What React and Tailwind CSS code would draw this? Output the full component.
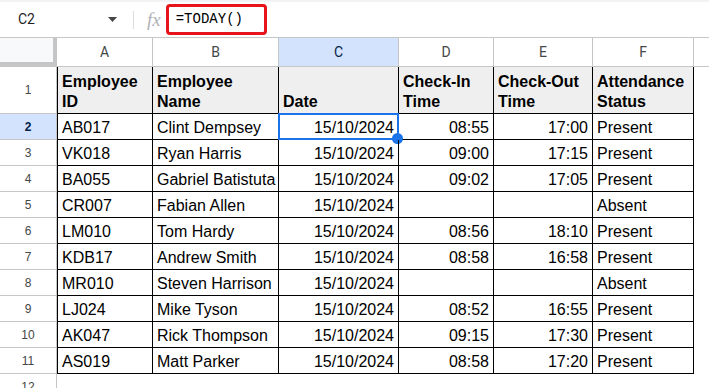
import React from "react";

// column widths: row header, A..F, rest
const COLS = "grid-cols-[57px_96px_126px_120px_95px_99px_101px_1fr]";

const rows = [
  ["AB017", "Clint Dempsey", "08:55", "17:00", "Present"],
  ["VK018", "Ryan Harris", "09:00", "17:15", "Present"],
  ["BA055", "Gabriel Batistuta", "09:02", "17:05", "Present"],
  ["CR007", "Fabian Allen", "", "", "Absent"],
  ["LM010", "Tom Hardy", "08:56", "18:10", "Present"],
  ["KDB17", "Andrew Smith", "08:58", "16:58", "Present"],
  ["MR010", "Steven Harrison", "", "", "Absent"],
  ["LJ024", "Mike Tyson", "08:52", "16:55", "Present"],
  ["AK047", "Rick Thompson", "09:15", "17:30", "Present"],
  ["AS019", "Matt Parker", "08:58", "17:20", "Present"],
];

const letters = ["A", "B", "C", "D", "E", "F", ""];

const Cell = ({ children, right, className = "" }) => (
  <div
    className={`flex items-end overflow-hidden whitespace-nowrap border-r border-b border-black px-[4px] pb-[1px] leading-[20px] ${right ? "justify-end" : ""} ${className}`}
  >
    {children}
  </div>
);

export default function App() {
  return (
    <div className="h-[388px] w-[709px] overflow-hidden bg-white font-['Liberation_Sans',Arial,sans-serif] text-[16px] text-black">
      <div className="h-[2px] bg-[#f1f3f4]" />

      {/* formula bar */}
      <div className="flex h-[35px] items-center">
        <div className="flex w-[133px] items-center pl-[18px] pr-[16px]">
          <span className="font-['Roboto',sans-serif] text-[14px] text-[#1f1f1f]">C2</span>
          <svg width="9" height="5" viewBox="0 0 9 5" className="ml-auto">
            <path d="M0 0h9L4.5 5z" fill="#444746" />
          </svg>
        </div>
        <div className="h-[18px] w-px bg-[#dadce0]" />
        <span className="ml-[13px] mr-[5px] font-['Liberation_Serif',serif] text-[19px] italic leading-none text-[#b0b3b8]">
          fx
        </span>
        <div className="mb-[1px] flex h-[31px] w-[101px] items-center rounded-[4px] border-[3px] border-[#e8141c] pl-[7px] font-['Liberation_Mono',monospace] text-[14px] text-black">
          =TODAY()
        </div>
      </div>

      {/* column header */}
      <div className={`grid ${COLS} h-[30px] border-t border-[#c4c7c5] font-['Roboto',sans-serif] text-[14px] text-[#444746]`}>
        <div className="border-r-[4px] border-b-[5px] border-[#c4c7c5] bg-[#f8f9fa]" />
        {letters.map((l, i) => (
          <div
            key={i}
            className={`flex items-center justify-center border-b border-[#c4c7c5] ${i < 6 ? "border-r" : ""} ${l === "C" ? "bg-[#d3e3fd] text-[#041e49]" : ""}`}
          >
            {l}
          </div>
        ))}
      </div>

      {/* header row 1 */}
      <div className={`grid ${COLS} h-[47px]`}>
        <div className="flex items-center justify-center border-r border-b border-[#c4c7c5] text-[12px] text-[#444746]">1</div>
        {[
          ["Employee", "ID"],
          ["Employee", "Name"],
          ["", "Date"],
          ["Check-In", "Time"],
          ["Check-Out", "Time"],
          ["Attendance", "Status"],
        ].map((h, i) => (
          <div
            key={i}
            className={`flex flex-col justify-end overflow-hidden whitespace-nowrap border-r border-b border-black bg-[#efefef] px-[4px] pb-[1px] font-bold leading-[20px] ${i === 0 ? "border-l" : ""}`}
          >
            {h[0] && <span>{h[0]}</span>}
            <span>{h[1]}</span>
          </div>
        ))}
        <div />
      </div>

      {/* data rows */}
      {rows.map((r, i) => {
        const sel = i === 0;
        return (
          <div key={i} className={`grid ${COLS} h-[26px]`}>
            <div
              className={`flex items-center justify-center border-r border-b border-[#c4c7c5] text-[12px] ${sel ? "bg-[#d3e3fd] font-bold text-[#041e49]" : "text-[#444746]"}`}
            >
              {i + 2}
            </div>
            <Cell className="border-l">{r[0]}</Cell>
            <Cell>{r[1]}</Cell>
            <Cell right className="relative overflow-visible">
              15/10/2024
              {sel && (
                <div className="absolute -top-px -left-px -right-px -bottom-px border-2 border-[#1a73e8]">
                  <div className="absolute -right-[6px] -bottom-[6px] h-[11px] w-[11px] rounded-full bg-[#1a73e8]" />
                </div>
              )}
            </Cell>
            <Cell right>{r[2]}</Cell>
            <Cell right>{r[3]}</Cell>
            <Cell>{r[4]}</Cell>
            <div />
          </div>
        );
      })}

      {/* row 12 */}
      <div className={`grid ${COLS} h-[26px]`}>
        <div className="flex items-center justify-center border-r border-[#c4c7c5] text-[12px] text-[#444746]">12</div>
      </div>
    </div>
  );
}
